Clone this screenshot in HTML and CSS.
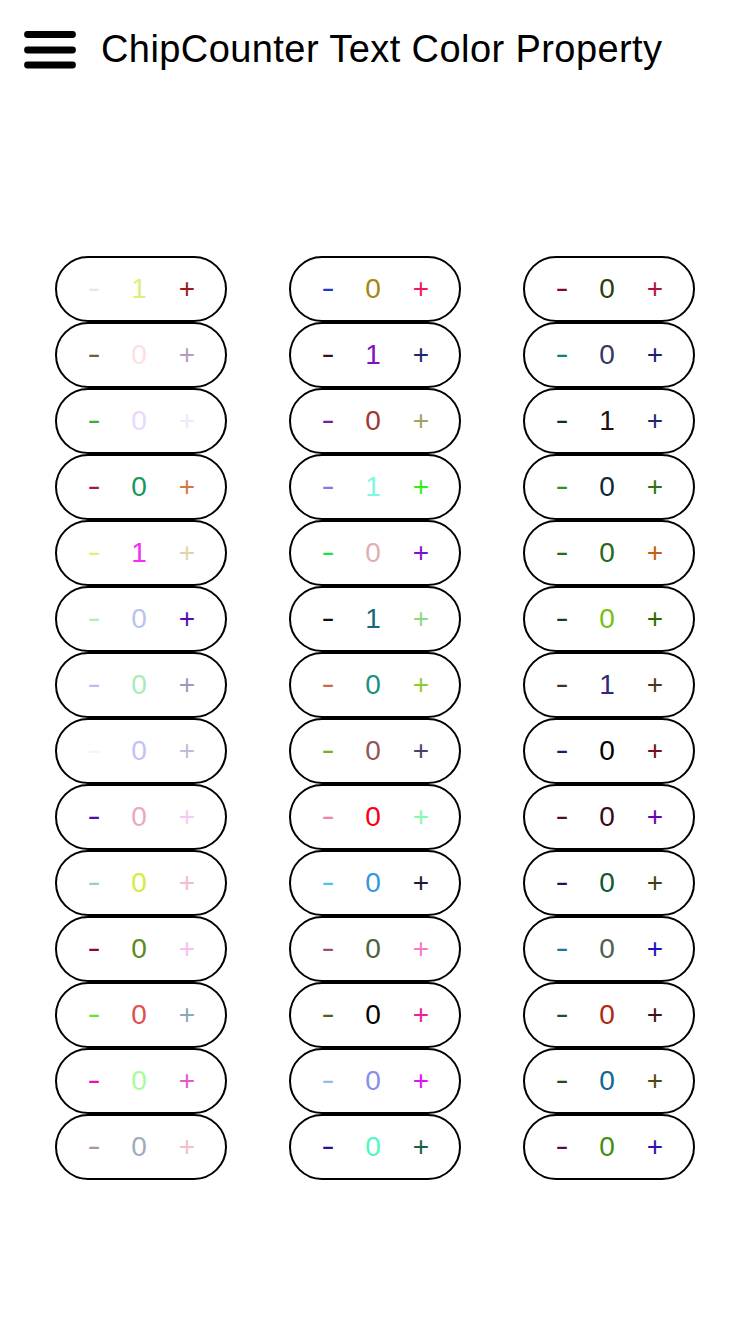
FILE: index.html
```html
<!DOCTYPE html>
<html lang="en">
<head>
<meta charset="utf-8">
<title>ChipCounter Text Color Property</title>
<link rel="stylesheet" href="styles.css">
</head>
<body>
<header class="bar">
  <svg class="menu" width="52" height="40" viewBox="0 0 52 40" aria-hidden="true">
    <line x1="3.5" y1="4.5" x2="48.5" y2="4.5"/>
    <line x1="3.5" y1="20" x2="48.5" y2="20"/>
    <line x1="3.5" y1="35" x2="48.5" y2="35"/>
  </svg>
  <h1 class="title">ChipCounter Text Color Property</h1>
</header>
<main class="grid">
  <div class="col">
    <div class="chip k1"><span class="minus">-</span><span class="num">1</span><span class="plus">+</span></div>
    <div class="chip k2"><span class="minus">-</span><span class="num">0</span><span class="plus">+</span></div>
    <div class="chip k3"><span class="minus">-</span><span class="num">0</span><span class="plus">+</span></div>
    <div class="chip k4"><span class="minus">-</span><span class="num">0</span><span class="plus">+</span></div>
    <div class="chip k5"><span class="minus">-</span><span class="num">1</span><span class="plus">+</span></div>
    <div class="chip k6"><span class="minus">-</span><span class="num">0</span><span class="plus">+</span></div>
    <div class="chip k7"><span class="minus">-</span><span class="num">0</span><span class="plus">+</span></div>
    <div class="chip k8"><span class="minus">-</span><span class="num">0</span><span class="plus">+</span></div>
    <div class="chip k9"><span class="minus">-</span><span class="num">0</span><span class="plus">+</span></div>
    <div class="chip k10"><span class="minus">-</span><span class="num">0</span><span class="plus">+</span></div>
    <div class="chip k11"><span class="minus">-</span><span class="num">0</span><span class="plus">+</span></div>
    <div class="chip k12"><span class="minus">-</span><span class="num">0</span><span class="plus">+</span></div>
    <div class="chip k13"><span class="minus">-</span><span class="num">0</span><span class="plus">+</span></div>
    <div class="chip k14"><span class="minus">-</span><span class="num">0</span><span class="plus">+</span></div>
  </div>
  <div class="col">
    <div class="chip k15"><span class="minus">-</span><span class="num">0</span><span class="plus">+</span></div>
    <div class="chip k16"><span class="minus">-</span><span class="num">1</span><span class="plus">+</span></div>
    <div class="chip k17"><span class="minus">-</span><span class="num">0</span><span class="plus">+</span></div>
    <div class="chip k18"><span class="minus">-</span><span class="num">1</span><span class="plus">+</span></div>
    <div class="chip k19"><span class="minus">-</span><span class="num">0</span><span class="plus">+</span></div>
    <div class="chip k20"><span class="minus">-</span><span class="num">1</span><span class="plus">+</span></div>
    <div class="chip k21"><span class="minus">-</span><span class="num">0</span><span class="plus">+</span></div>
    <div class="chip k22"><span class="minus">-</span><span class="num">0</span><span class="plus">+</span></div>
    <div class="chip k23"><span class="minus">-</span><span class="num">0</span><span class="plus">+</span></div>
    <div class="chip k24"><span class="minus">-</span><span class="num">0</span><span class="plus">+</span></div>
    <div class="chip k25"><span class="minus">-</span><span class="num">0</span><span class="plus">+</span></div>
    <div class="chip k26"><span class="minus">-</span><span class="num">0</span><span class="plus">+</span></div>
    <div class="chip k27"><span class="minus">-</span><span class="num">0</span><span class="plus">+</span></div>
    <div class="chip k28"><span class="minus">-</span><span class="num">0</span><span class="plus">+</span></div>
  </div>
  <div class="col">
    <div class="chip k29"><span class="minus">-</span><span class="num">0</span><span class="plus">+</span></div>
    <div class="chip k30"><span class="minus">-</span><span class="num">0</span><span class="plus">+</span></div>
    <div class="chip k31"><span class="minus">-</span><span class="num">1</span><span class="plus">+</span></div>
    <div class="chip k32"><span class="minus">-</span><span class="num">0</span><span class="plus">+</span></div>
    <div class="chip k33"><span class="minus">-</span><span class="num">0</span><span class="plus">+</span></div>
    <div class="chip k34"><span class="minus">-</span><span class="num">0</span><span class="plus">+</span></div>
    <div class="chip k35"><span class="minus">-</span><span class="num">1</span><span class="plus">+</span></div>
    <div class="chip k36"><span class="minus">-</span><span class="num">0</span><span class="plus">+</span></div>
    <div class="chip k37"><span class="minus">-</span><span class="num">0</span><span class="plus">+</span></div>
    <div class="chip k38"><span class="minus">-</span><span class="num">0</span><span class="plus">+</span></div>
    <div class="chip k39"><span class="minus">-</span><span class="num">0</span><span class="plus">+</span></div>
    <div class="chip k40"><span class="minus">-</span><span class="num">0</span><span class="plus">+</span></div>
    <div class="chip k41"><span class="minus">-</span><span class="num">0</span><span class="plus">+</span></div>
    <div class="chip k42"><span class="minus">-</span><span class="num">0</span><span class="plus">+</span></div>
  </div>
</main>
</body>
</html>
```

FILE: styles.css
```css
* { box-sizing: border-box; }

html, body {
  margin: 0;
  padding: 0;
  background: #ffffff;
}

body {
  width: 750px;
  min-height: 1334px;
  font-family: "Liberation Sans", Arial, sans-serif;
  color: #000;
}

.bar {
  display: flex;
  align-items: center;
  height: 100px;
  padding-left: 24px;
  gap: 25px;
}

.menu line {
  stroke: #000;
  stroke-width: 6.8;
  stroke-linecap: round;
}

.title {
  margin: 0 0 3px;
  font-size: 38px;
  font-weight: 400;
  line-height: 1;
  letter-spacing: 0.42px;
}

.grid {
  display: flex;
  justify-content: flex-start;
  gap: 62px;
  padding-top: 156px;
  padding-left: 55px;
}

.col {
  display: flex;
  flex-direction: column;
}

.chip {
  width: 172px;
  height: 66px;
  border: 2px solid #000;
  border-radius: 33px;
  display: flex;
  align-items: center;
  padding-left: 17px;
  font-size: 28px;
  line-height: 1;
}

.chip span {
  width: 40px;
  text-align: center;
}

.minus {
  color: var(--m);
  display: inline-block;
  transform: scaleX(1.4);
  position: relative;
  top: -1px;
}

.num {
  color: var(--n);
  margin-left: 5px;
}

.plus {
  color: var(--p);
  margin-left: 8px;
}

/* column 1 */
.k1  { --m: #ebe4e4; --n: #e0ec7c; --p: #9b1c1c; }
.k2  { --m: #6b6038; --n: #fde0e4; --p: #b89ac0; }
.k3  { --m: #3cb030; --n: #ead8fc; --p: #eceaf8; }
.k4  { --m: #a01848; --n: #18985c; --p: #d07a48; }
.k5  { --m: #d0f870; --n: #ee30ee; --p: #e0d4a8; }
.k6  { --m: #b0f0b0; --n: #b8c4f0; --p: #5010b0; }
.k7  { --m: #b4c0f4; --n: #a8ecb8; --p: #9a9ac0; }
.k8  { --m: #eefae8; --n: #c0c4f4; --p: #c0bcd8; }
.k9  { --m: #4810a8; --n: #eca8c0; --p: #f8c8f4; }
.k10 { --m: #a0d0b0; --n: #d4ec40; --p: #f8b8d4; }
.k11 { --m: #880830; --n: #5a8a20; --p: #f4c0f4; }
.k12 { --m: #70e030; --n: #e05050; --p: #88aab8; }
.k13 { --m: #f010b0; --n: #a8fc98; --p: #e058d0; }
.k14 { --m: #a89890; --n: #a0acbc; --p: #f0c0c8; }

/* column 2 */
.k15 { --m: #2038d0; --n: #a88410; --p: #f01860; }
.k16 { --m: #401010; --n: #8010c0; --p: #202868; }
.k17 { --m: #7020a0; --n: #a03830; --p: #a0a060; }
.k18 { --m: #8878e0; --n: #80f8e0; --p: #30f010; }
.k19 { --m: #20e040; --n: #e0b0b0; --p: #8010d0; }
.k20 { --m: #101010; --n: #186878; --p: #90d880; }
.k21 { --m: #d06848; --n: #209080; --p: #90c830; }
.k22 { --m: #78b020; --n: #905858; --p: #484068; }
.k23 { --m: #f080b0; --n: #f80010; --p: #88f8b0; }
.k24 { --m: #50c0f0; --n: #3898e0; --p: #201838; }
.k25 { --m: #a04878; --n: #506040; --p: #f878c8; }
.k26 { --m: #506020; --n: #000000; --p: #f02090; }
.k27 { --m: #98b8f0; --n: #8890e8; --p: #e010f8; }
.k28 { --m: #281098; --n: #50f8c0; --p: #186048; }

/* column 3 */
.k29 { --m: #800830; --n: #284010; --p: #b01040; }
.k30 { --m: #108070; --n: #383860; --p: #182070; }
.k31 { --m: #103020; --n: #201010; --p: #202868; }
.k32 { --m: #309020; --n: #102838; --p: #307010; }
.k33 { --m: #207010; --n: #286818; --p: #c06010; }
.k34 { --m: #104020; --n: #78c010; --p: #306800; }
.k35 { --m: #403028; --n: #302878; --p: #483818; }
.k36 { --m: #102078; --n: #000000; --p: #701020; }
.k37 { --m: #501020; --n: #400818; --p: #6008b0; }
.k38 { --m: #201060; --n: #105830; --p: #404010; }
.k39 { --m: #1878a0; --n: #506050; --p: #2010c0; }
.k40 { --m: #284830; --n: #b02810; --p: #401018; }
.k41 { --m: #284818; --n: #106890; --p: #504810; }
.k42 { --m: #600840; --n: #409010; --p: #3010b0; }
```
